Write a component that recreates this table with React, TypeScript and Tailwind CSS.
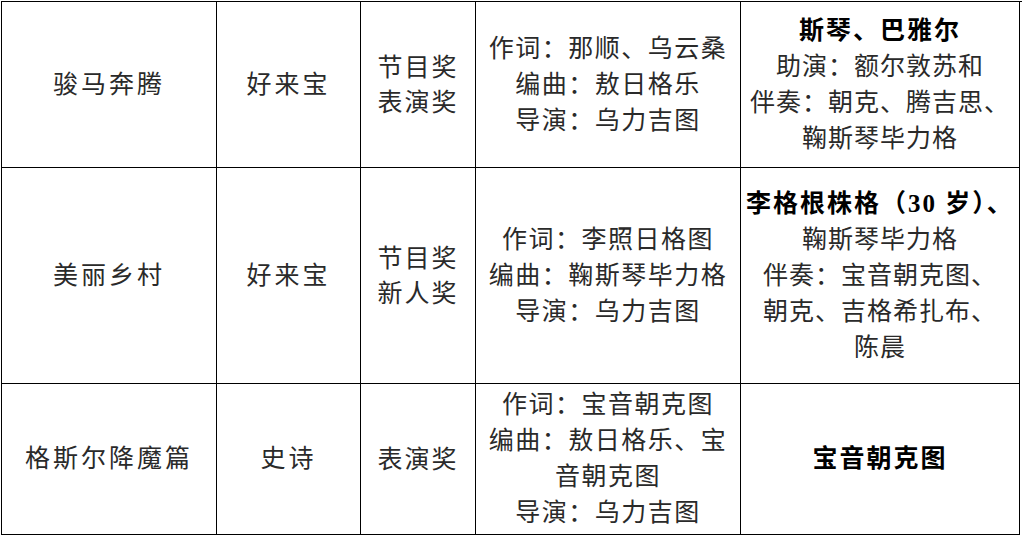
const font = { fontFamily: '"Liberation Serif", "Noto Sans CJK SC", serif' };

type Line = { text: string; bold?: boolean };

const rows: { title: string; kind: string; award: string[]; credits: string[]; cast: Line[] }[] = [
  {
    title: "骏马奔腾",
    kind: "好来宝",
    award: ["节目奖", "表演奖"],
    credits: ["作词：那顺、乌云桑", "编曲：敖日格乐", "导演：乌力吉图"],
    cast: [
      { text: "斯琴、巴雅尔", bold: true },
      { text: "助演：额尔敦苏和" },
      { text: "伴奏：朝克、腾吉思、" },
      { text: "鞠斯琴毕力格" },
    ],
  },
  {
    title: "美丽乡村",
    kind: "好来宝",
    award: ["节目奖", "新人奖"],
    credits: ["作词：李照日格图", "编曲：鞠斯琴毕力格", "导演：乌力吉图"],
    cast: [
      { text: "李格根株格（30 岁）、", bold: true },
      { text: "鞠斯琴毕力格" },
      { text: "伴奏：宝音朝克图、" },
      { text: "朝克、吉格希扎布、" },
      { text: "陈晨" },
    ],
  },
  {
    title: "格斯尔降魔篇",
    kind: "史诗",
    award: ["表演奖"],
    credits: ["作词：宝音朝克图", "编曲：敖日格乐、宝", "音朝克图", "导演：乌力吉图"],
    cast: [{ text: "宝音朝克图", bold: true }],
  },
];

function Cell({ children }: { children: React.ReactNode }) {
  return (
    <div className="flex flex-col items-center justify-center border-r border-b border-black text-center">
      {children}
    </div>
  );
}

export default function App() {
  return (
    <div className="h-[536px] w-[1022px] overflow-hidden bg-white pt-[1px] pl-[1px]" style={font}>
      <div className="grid grid-cols-[215px_144px_115px_265px_279px] grid-rows-[166px_216px_151px] border-t border-l border-black text-[25px] leading-[36px] text-[#2a2a2a]">
        {rows.map((row) => (
          <div key={row.title} className="contents">
            <Cell>
              <span className="tracking-[3px]">{row.title}</span>
            </Cell>
            <Cell>
              <span className="tracking-[3px]">{row.kind}</span>
            </Cell>
            <Cell>
              {row.award.map((a) => (
                <div key={a} className="leading-[35px] tracking-[2px]">
                  {a}
                </div>
              ))}
            </Cell>
            <Cell>
              {row.credits.map((c) => (
                <div key={c} className="whitespace-nowrap tracking-[1.5px]">
                  {c}
                </div>
              ))}
            </Cell>
            <Cell>
              {row.cast.map((l) => (
                <div
                  key={l.text}
                  className={
                    l.bold
                      ? "whitespace-nowrap font-bold tracking-[2px] text-black"
                      : "whitespace-nowrap tracking-[1px]"
                  }
                >
                  {l.text}
                </div>
              ))}
            </Cell>
          </div>
        ))}
      </div>
    </div>
  );
}
